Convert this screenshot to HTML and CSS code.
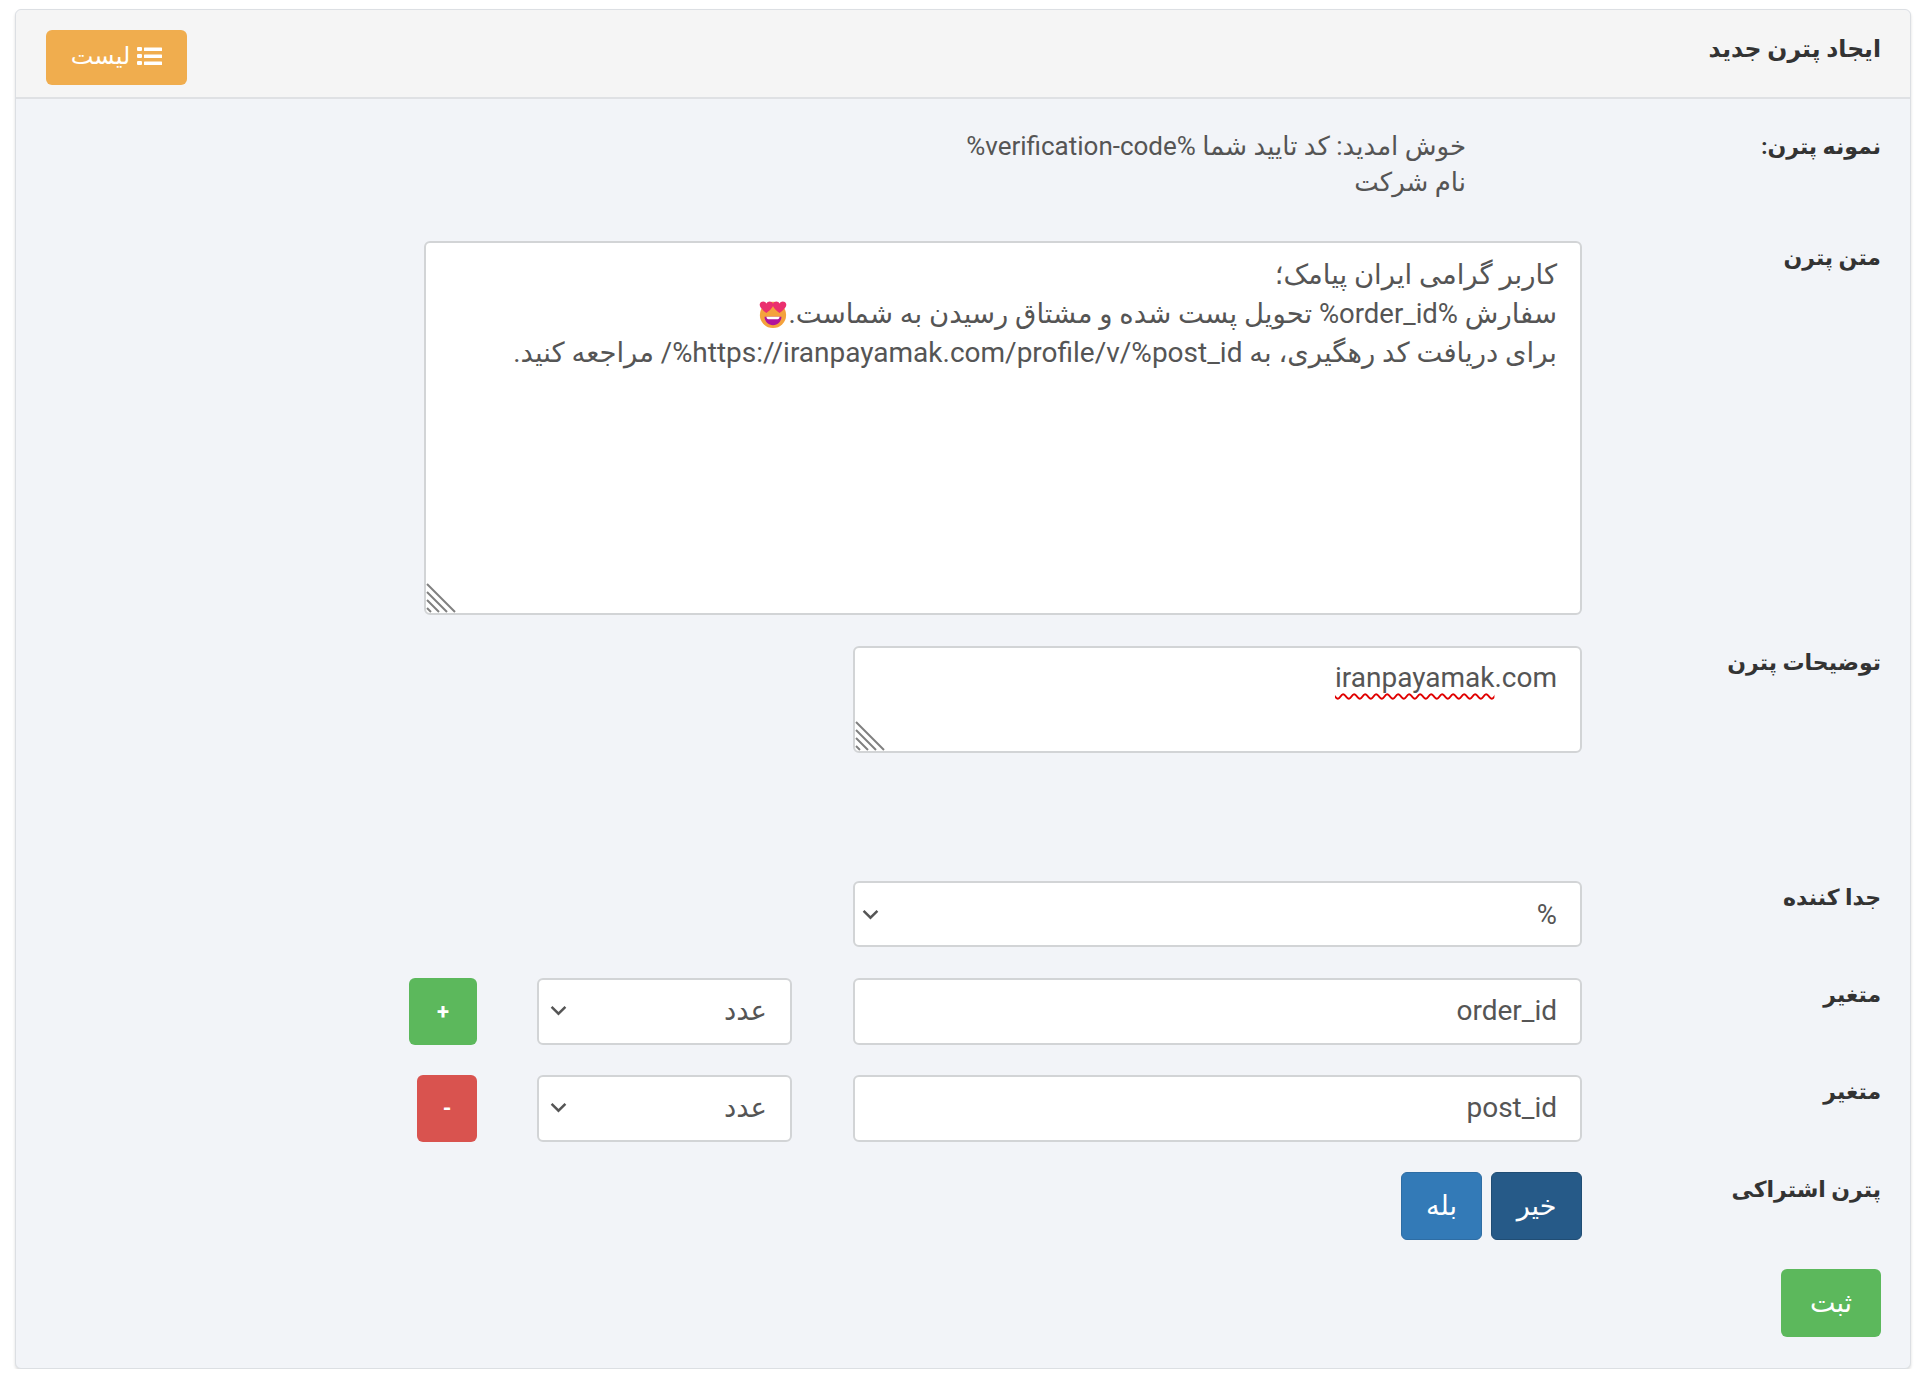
FILE: index.html
```html
<!DOCTYPE html>
<html lang="fa" dir="rtl">
	<head>
		<meta charset="UTF-8">
		<title>ایجاد پترن جدید</title>
		<link rel="stylesheet" href="styles.css">
	</head>
	<body>
		<div class="panel">
			<div class="panelHead">
				<h1 class="panelTitle">ایجاد پترن جدید</h1>
				<a class="btn btnList">
					<svg class="listIcon" viewBox="0 0 25 20" width="25" height="20" fill="currentColor">
						<rect x="0" y="1" width="5" height="4" rx="1"/>
						<rect x="0" y="8" width="5" height="4" rx="1"/>
						<rect x="0" y="15" width="5" height="4" rx="1"/>
						<rect x="7" y="1.500" width="18" height="3.500" rx=".5"/>
						<rect x="7" y="8.500" width="18" height="3.500" rx=".5"/>
						<rect x="7" y="15.500" width="18" height="3.500" rx=".5"/>
					</svg>
					لیست
				</a>
			</div>

			<div class="panelBody">
				<div class="row rowSample">
					<label class="rowLabel">نمونه پترن:</label>
					<div class="sample">خوش امدید: کد تایید شما %verification-code%<br>نام شرکت</div>
				</div>

				<div class="row">
					<label class="rowLabel">متن پترن</label>
					<div class="textBox textBoxBig">
						کاربر گرامی ایران پیامک؛<br>
						سفارش %order_id% تحویل پست شده و مشتاق رسیدن به شماست.<svg class="emoji" viewBox="0 0 32 32" width="30" height="30">
							<circle cx="16" cy="17" r="14" fill="#f4a23c"/>
							<path d="M7 19h18c0 5-4 9-9 9s-9-4-9-9z" fill="#b0129c"/>
							<path d="M9 19h14c0 1.500-1 2.500-2 2.500H11c-1 0-2-1-2-2.500z" fill="#fff"/>
							<path d="M9 15C4 11 1 8 2 5c1-3 6-3 7 0 1-3 6-3 7 0 1 3-2 6-7 10z" fill="#ea2f6e"/>
							<path d="M23 15c-5-4-8-7-7-10 1-3 6-3 7 0 1-3 6-3 7 0 1 3-2 6-7 10z" fill="#ea2f6e"/>
						</svg><br>
						برای دریافت کد رهگیری، به <span class="latin">https://iranpayamak.com/profile/v/%post_id</span>%/ مراجعه کنید.
						<svg class="grip" viewBox="0 0 30 30" width="30" height="30" stroke="#808080" stroke-width="2">
							<path d="M1 1l28 28M1 9l20 20M1 17l12 12M1 25l4 4"/>
						</svg>
					</div>
				</div>

				<div class="row rowLast">
					<label class="rowLabel">توضیحات پترن</label>
					<div class="textBox textBoxSmall">
						<span class="misspelled">iranpayamak</span>.com
						<svg class="grip" viewBox="0 0 30 30" width="30" height="30" stroke="#808080" stroke-width="2">
							<path d="M1 1l28 28M1 9l20 20M1 17l12 12M1 25l4 4"/>
						</svg>
					</div>
				</div>

				<div class="row">
					<label class="rowLabel">جدا کننده</label>
					<div class="select selectWide">
						<span>%</span>
						<svg class="chevron" viewBox="0 0 16 10" width="17" height="11"><path d="M1.500 1.500L8 8l6.500-6.500" fill="none" stroke="#555" stroke-width="2.300"/></svg>
					</div>
				</div>

				<div class="row rowVar">
					<label class="rowLabel">متغیر</label>
					<div class="input">order_id</div>
					<div class="select selectType">
						<span>عدد</span>
						<svg class="chevron" viewBox="0 0 16 10" width="17" height="11"><path d="M1.500 1.500L8 8l6.500-6.500" fill="none" stroke="#555" stroke-width="2.300"/></svg>
					</div>
					<a class="btn btnAdd">+</a>
				</div>

				<div class="row rowVar">
					<label class="rowLabel">متغیر</label>
					<div class="input">post_id</div>
					<div class="select selectType">
						<span>عدد</span>
						<svg class="chevron" viewBox="0 0 16 10" width="17" height="11"><path d="M1.500 1.500L8 8l6.500-6.500" fill="none" stroke="#555" stroke-width="2.300"/></svg>
					</div>
					<a class="btn btnRemove">-</a>
				</div>

				<div class="row rowShared">
					<label class="rowLabel">پترن اشتراکی</label>
					<div class="switchGroup">
						<a class="btn btnNo">خیر</a>
						<a class="btn btnYes">بله</a>
					</div>
				</div>

				<a class="btn btnSubmit">ثبت</a>
			</div>
		</div>
	</body>
</html>
```

FILE: styles.css
```css
*{
	margin: 0;
	padding: 0;
	box-sizing: border-box;
}

body{
	padding: 9px 9px 0 15px;
	background-color: #fff;
	font-family: Roboto, "DejaVu Sans", sans-serif;
	font-size: 27.5px;
	color: #555;
}

.panel{
	height: 1360px;
	border: 1px solid #dcdfe3;
	border-radius: 6px;
	background-color: #f2f4f8;
	box-shadow: 0 2px 3px rgba(0,0,0,.14);
}

.panelHead{
	display: flex;
	justify-content: space-between;
	height: 89px;
	padding: 20px 29px 0 30px;
	border-bottom: 2px solid #dfe1e4;
	border-radius: 6px 6px 0 0;
	background-color: #f5f5f5;
}

.panelTitle{
	padding-top: 4px;
	font-size: 23.5px;
	font-weight: bold;
	line-height: 30px;
	color: #333;
}

.btn{
	display: flex;
	align-items: center;
	justify-content: center;
	border-radius: 6px;
	color: #fff;
	font-size: 27px;
}

.btnList{
	width: 141px;
	height: 55px;
	gap: 7px;
	padding-bottom: 4px;
	background-color: #f0ad4e;
	font-size: 24px;
}

.listIcon{
	flex: none;
}

.panelBody{
	padding: 29px 29px 0 0;
}

.row{
	display: flex;
	align-items: flex-start;
	margin-bottom: 31px;
}

.rowSample{
	margin-bottom: 41px;
}

.rowSample .rowLabel{
	padding-top: 2px;
}

.rowLast{
	margin-bottom: 128px;
}

.rowVar{
	margin-bottom: 30px;
}

.rowShared{
	margin-bottom: 29px;
}

.rowShared .rowLabel{
	padding-top: 1px;
}

.rowLabel{
	flex: none;
	width: 299px;
	font-size: 22px;
	font-weight: bold;
	line-height: 34px;
	color: #333;
}

.sample{
	padding-right: 116px;
	font-size: 26px;
	line-height: 36px;
}

.textBox{
	position: relative;
	padding: 12px 23px;
	border: 2px solid #d2d4d6;
	border-radius: 6px;
	background-color: #fff;
	line-height: 39px;
}

.textBoxBig{
	width: 1158px;
	height: 374px;
}

.textBoxSmall{
	width: 729px;
	height: 107px;
	padding-top: 10px;
	font-size: 28px;
}

.latin{
	font-size: 28px;
}

.emoji{
	vertical-align: -6px;
}

.grip{
	position: absolute;
	left: 0;
	bottom: 0;
}

.misspelled{
	text-decoration: underline wavy #e00000;
	text-decoration-thickness: 2px;
	text-underline-offset: 6px;
}

.input,
.select{
	display: flex;
	align-items: center;
	height: 66px;
	padding: 0 23px;
	border: 2px solid #d2d4d6;
	border-radius: 6px;
	background-color: #fff;
}

.rowVar .input,
.rowVar .select{
	height: 67px;
	padding-bottom: 2px;
}

.input{
	width: 729px;
	margin-left: 61px;
	font-size: 28px;
}

.select{
	justify-content: space-between;
}

.selectWide{
	width: 729px;
	padding-left: 7px;
}

.selectType{
	width: 255px;
	margin-left: 60px;
	padding-left: 11px;
}

.btnAdd{
	width: 68px;
	height: 67px;
	background-color: #5cb85c;
	font-size: 22px;
	font-weight: bold;
}

.btnRemove{
	width: 60px;
	height: 67px;
	background-color: #d9534f;
	font-size: 22px;
	font-weight: bold;
}

.switchGroup{
	display: flex;
	gap: 9px;
}

.btnNo{
	width: 91px;
	height: 68px;
	border: 1px solid #204d74;
	background-color: #265a88;
}

.btnYes{
	width: 81px;
	height: 68px;
	border: 1px solid #2e6da4;
	background-color: #337ab7;
}

.btnSubmit{
	width: 100px;
	height: 68px;
	background-color: #5cb85c;
}
```
